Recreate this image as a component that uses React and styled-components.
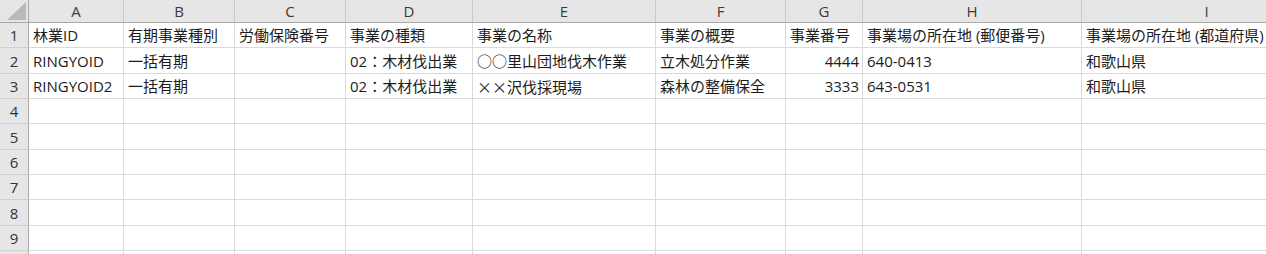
import React from "react";
import styled, { createGlobalStyle } from "styled-components";

const Global = createGlobalStyle`
  html, body { margin: 0; padding: 0; background: #fff; }
  body { width: 1266px; height: 254px; overflow: hidden; }
`;

const COLS = [
  { key: "A", w: 95 },
  { key: "B", w: 111 },
  { key: "C", w: 111 },
  { key: "D", w: 127 },
  { key: "E", w: 183 },
  { key: "F", w: 130 },
  { key: "G", w: 77 },
  { key: "H", w: 219 },
  { key: "I", w: 250 },
];

const ROW_H = [25, 26, 25, 25, 26, 25, 25, 26, 25, 25];

const Wide = styled.span`
  font-family: "Noto Sans CJK JP", sans-serif;
`;

const DATA = [
  ["林業ID", "有期事業種別", "労働保険番号", "事業の種類", "事業の名称", "事業の概要", "事業番号", "事業場の所在地 (郵便番号)", "事業場の所在地 (都道府県)"],
  ["RINGYOID", "一括有期", "", "02：木材伐出業", "○○里山団地伐木作業", "立木処分作業", { v: "4444", num: true }, "640-0413", "和歌山県"],
  ["RINGYOID2", "一括有期", "", "02：木材伐出業", { v: (<><Wide>××</Wide>沢伐採現場</>) }, "森林の整備保全", { v: "3333", num: true }, "643-0531", "和歌山県"],
];

const Sheet = styled.div`
  display: grid;
  grid-template-columns: 29px ${COLS.map((c) => c.w + "px").join(" ")};
  grid-template-rows: 23px ${ROW_H.map((h) => h + "px").join(" ")};
  width: max-content;
  font-family: "Open Sans", "Noto Sans CJK JP", sans-serif;
  font-size: 15px;
  color: #1c1c1c;
`;

const Corner = styled.div`
  position: relative;
  background: #e6e6e6;
  border-right: 1px solid #a9a9a9;
  border-bottom: 1px solid #a9a9a9;
  box-sizing: border-box;
`;

const CornerMark = styled.svg`
  position: absolute;
  right: 2px;
  bottom: 2px;
`;

const ColHead = styled.div`
  box-sizing: border-box;
  background: #e6e6e6;
  border-right: 1px solid #c9c9c9;
  border-bottom: 1px solid #a9a9a9;
  display: flex;
  align-items: center;
  justify-content: center;
  color: #3b3b3b;
  line-height: 1;
`;

const RowHead = styled.div`
  box-sizing: border-box;
  background: #e6e6e6;
  border-right: 1px solid #a9a9a9;
  border-bottom: 1px solid #cfcfcf;
  display: flex;
  align-items: center;
  justify-content: center;
  color: #333;
  line-height: 1;
  padding-top: 1px;
`;

const Cell = styled.div`
  box-sizing: border-box;
  border-right: 1px solid #dadada;
  border-bottom: 1px solid #dadada;
  display: flex;
  align-items: center;
  justify-content: ${(p) => (p.$num ? "flex-end" : "flex-start")};
  padding: 1px 3px 0 4px;
  white-space: nowrap;
  overflow: hidden;
  line-height: 1;
`;

export default function App() {
  return (
    <>
      <Global />
      <Sheet>
        <Corner>
          <CornerMark width="19" height="18" viewBox="0 0 19 18">
            <polygon points="0,18 19,18 19,0" fill="#b9b9b9" />
          </CornerMark>
        </Corner>
        {COLS.map((c) => (
          <ColHead key={c.key}>{c.key}</ColHead>
        ))}
        {ROW_H.map((_, r) => (
          <React.Fragment key={r}>
            <RowHead>{r + 1}</RowHead>
            {COLS.map((c, ci) => {
              const raw = DATA[r] ? DATA[r][ci] : "";
              const isObj = raw && typeof raw === "object";
              return (
                <Cell key={c.key} $num={isObj && raw.num}>
                  <span>{isObj ? raw.v : raw}</span>
                </Cell>
              );
            })}
          </React.Fragment>
        ))}
      </Sheet>
    </>
  );
}
